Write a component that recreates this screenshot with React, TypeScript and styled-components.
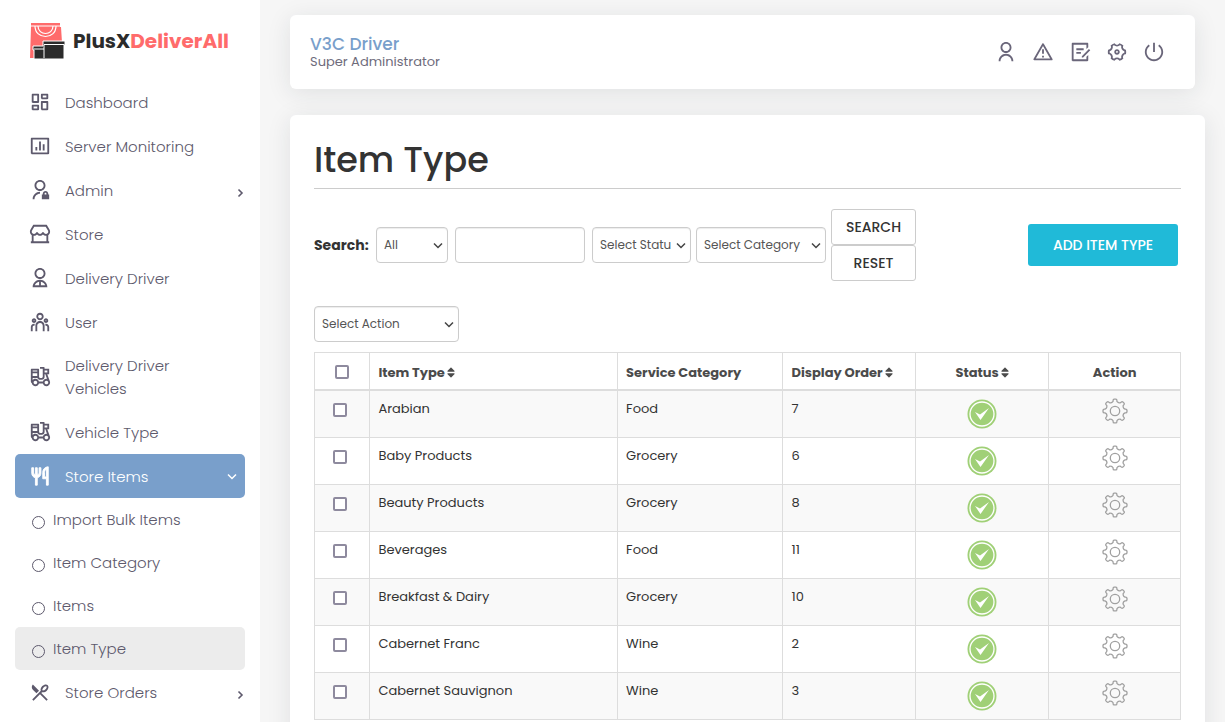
import React from 'react';
import styled, { createGlobalStyle, css } from 'styled-components';
import {
  RiDashboardLine,
  RiBarChartBoxLine,
  RiAdminLine,
  RiStore2Line,
  RiUser2Line,
  RiTeamLine,
  RiTakeawayLine,
  RiRestaurant2Line,
  RiRestaurantLine,
  RiUserLine,
  RiAlertLine,
  RiDraftLine,
  RiSettings4Line,
  RiShutDownLine,
} from 'react-icons/ri';
import { FaSort } from 'react-icons/fa';

const GlobalStyle = createGlobalStyle`
  *, *::before, *::after { box-sizing: border-box; }
  html { overflow: hidden; }
  body {
    margin: 0;
    background: #f6f6f6;
    color: #333;
    font-family: Poppins, Inter, "Open Sans", sans-serif;
    font-size: 14px;
    line-height: 20px;
  }
  button, input, select { font-family: inherit; }
  a { color: inherit; text-decoration: none; }
`;

const Page = styled.div`
  display: flex;
  height: 100vh;
  overflow: hidden;
`;

const Sidebar = styled.aside`
  flex: none;
  width: 260px;
  background: #fff;
  overflow: hidden;
`;

const Brand = styled.a`
  display: flex;
  align-items: center;
  gap: 8px;
  height: 80px;
  padding: 2px 0 0 29px;
  font-size: 20px;
  font-weight: 700;
  color: #2b2b2b;
`;

const BrandAccent = styled.span`
  color: #ff6b6b;
`;

const Menu = styled.ul`
  list-style: none;
  margin: 0;
  padding: 0 15px;
`;

const MenuLink = styled.a<{ $active?: boolean }>`
  display: flex;
  align-items: center;
  min-height: 44px;
  padding: 10px 0 10px 14px;
  border-radius: 5px;
  font-size: 15px;
  font-weight: 300;
  line-height: 23px;
  color: #5d596c;
  > svg { flex: none; width: 22px; height: 22px; }
  ${(p) =>
    p.$active &&
    css`
      background: #799fcb;
      color: #fff;
    `}
`;

const MenuLabel = styled.span`
  flex: 1;
  max-width: 140px;
  margin: 0 auto 0 14px;
`;

const Arrow = styled.span<{ $open?: boolean }>`
  display: flex;
  flex: none;
  padding: ${(p) => (p.$open ? '2px 8px 0 0' : '5px 0 0')};
`;

const SubLink = styled.a<{ $active?: boolean }>`
  display: flex;
  align-items: center;
  gap: 8px;
  height: 43px;
  padding-left: 17px;
  border-radius: 5px;
  font-size: 15px;
  font-weight: 300;
  color: #5d596c;
  background: ${(p) => (p.$active ? '#ececec' : 'transparent')};
  &::before {
    content: '';
    width: 13px;
    height: 13px;
    margin-top: 5px;
    border: 1px solid #5d596c;
    border-radius: 50%;
  }
`;

const Main = styled.main`
  flex: 1;
  min-width: 0;
  padding: 15px 20px 0 30px;
`;

const TopBar = styled.header`
  display: flex;
  align-items: center;
  justify-content: space-between;
  height: 74px;
  margin-right: 10px;
  padding: 0 30px 0 20px;
  background: #fff;
  border-radius: 6px;
  box-shadow: 0 4px 24px rgba(34, 41, 47, 0.1);
`;

const Account = styled.div`
  padding-top: 2px;
  line-height: 18px;
`;

const UserName = styled.div`
  font-size: 17px;
  font-weight: 500;
  color: #799fcb;
`;

const UserRole = styled.div`
  font-size: 13px;
  color: #6e6b7b;
`;

const Tools = styled.nav`
  display: flex;
  gap: 15px;
  color: #6a667a;
`;

const ToolLink = styled.a`
  display: flex;
  svg { width: 22px; height: 22px; }
`;

const Card = styled.section`
  margin-top: 26px;
  padding: 24px;
  background: #fff;
  border-radius: 6px;
  box-shadow: 0 4px 24px rgba(34, 41, 47, 0.1);
`;

const Title = styled.h1`
  margin: 0 0 20px;
  padding-bottom: 7px;
  border-bottom: 1px solid #ccc;
  font-size: 35px;
  font-weight: 500;
  line-height: 42px;
  color: #333;
`;

const Filters = styled.form`
  display: flex;
  align-items: center;
  gap: 5px;
  padding-right: 3px;
`;

const SearchLabel = styled.label`
  width: 57px;
  font-weight: 700;
  white-space: nowrap;
`;

const fieldBox = css`
  height: 36px;
  border: 1px solid #ccc;
  border-radius: 4px;
  box-shadow: inset 0 1px 1px rgba(0, 0, 0, 0.075);
  font-size: 12px;
  color: #555;
  background: #fff;
`;

const SelectWrap = styled.span<{ $width: number; $gap?: boolean }>`
  position: relative;
  flex: none;
  display: inline-flex;
  width: ${(p) => p.$width}px;
  margin-right: ${(p) => (p.$gap ? 2 : 0)}px;
  svg {
    position: absolute;
    top: 15px;
    right: 5px;
    color: #444;
    pointer-events: none;
  }
`;

const Select = styled.select`
  ${fieldBox}
  appearance: none;
  width: 100%;
  padding: 0 19px 1px 7px;
`;

const TextField = styled.input`
  ${fieldBox}
  width: 130px;
  margin-right: 2px;
  padding: 0 8px;
`;

const ButtonStack = styled.div`
  display: flex;
  flex-direction: column;
  width: 85px;
`;

const Button = styled.button`
  height: 36px;
  padding: 0;
  border: 1px solid #ccc;
  border-radius: 3px;
  background: #fff;
  font-size: 14px;
  font-weight: 500;
  color: #333;
`;

const AddButton = styled(Button)`
  width: 150px;
  height: 42px;
  margin-left: auto;
  border: 0;
  background: #20bad8;
  color: #fff;
`;

const BulkBar = styled.div`
  margin: 25px 0 10px;
  display: flex;
`;

const Table = styled.table`
  width: 100%;
  table-layout: fixed;
  border-collapse: collapse;
  font-size: 13px;
`;

const Th = styled.th<{ $center?: boolean }>`
  height: 37px;
  padding: 4px 8px 0;
  border: 1px solid #ddd;
  border-bottom-width: 2px;
  text-align: ${(p) => (p.$center ? 'center' : 'left')};
  font-weight: 700;
  color: #4b4b4b;
  white-space: nowrap;
  svg { width: 8px; margin-left: 2px; vertical-align: -2px; }
`;

const Td = styled.td<{ $center?: boolean }>`
  height: 47px;
  padding: 8px;
  border: 1px solid #ddd;
  vertical-align: top;
  text-align: ${(p) => (p.$center ? 'center' : 'left')};
  svg { display: block; margin: 0 auto; }
`;

const Row = styled.tr`
  &:nth-child(odd) { background: #f9f9f9; }
`;

const Tick = styled.input`
  appearance: none;
  display: inline-block;
  width: 14px;
  height: 14px;
  margin: 4px 4px 0 0;
  border: 2px solid #8e8a9e;
  border-radius: 2px;
  background: #fff;
  vertical-align: top;
`;

const HeadTick = styled(Tick)`
  margin: 2px 0 0;
`;

const IconButton = styled.button`
  display: block;
  margin: -1px auto 0;
  padding: 0;
  border: 0;
  background: none;
`;

const Logo = () => (
  <svg width="36" height="36" viewBox="0 0 36 36" aria-hidden="true">
    <path d="M2 0h29v4h1l2 31H1L2 4z" fill="#ff6b6b" />
    <path d="M2 3h29" stroke="#fff" strokeWidth="1" />
    <path d="M6 3c0 14 21 14 21 0M9 3c0 10 15 10 15 0" fill="none" stroke="#fff" strokeWidth="1.2" />
    <path d="M4 23h10v-5h22v4h-1v14H5v-9H4z" fill="#2b2b2b" stroke="#fff" />
    <path d="M15 22v13M15 21.500h20M5 26h10" stroke="#fff" />
  </svg>
);

const polar = (radius: number, degrees: number) => {
  const a = (degrees * Math.PI) / 180;
  return `${(13 + radius * Math.cos(a)).toFixed(2)} ${(13 + radius * Math.sin(a)).toFixed(2)}`;
};

const gearPath =
  Array.from({ length: 8 }, (_, i) => {
    const a = i * 45;
    return [
      `${i ? 'L' : 'M'}${polar(10.8, a - 10)}`,
      `Q${polar(12, a - 9)} ${polar(12, a - 4)}`,
      `L${polar(12, a + 4)}`,
      `Q${polar(12, a + 9)} ${polar(10.8, a + 10)}`,
      `Q${polar(9.6, a + 10)} ${polar(9.3, a + 16)}`,
      `Q${polar(8.8, a + 22.5)} ${polar(9.3, a + 29)}`,
      `Q${polar(9.6, a + 35)} ${polar(10.8, a + 35)}`,
    ].join('');
  }).join('') + 'Z';

const Gear = () => (
  <svg width="26" height="26" viewBox="0 0 26 26" fill="none" stroke="#a0a0a0" strokeWidth="1.3" strokeLinejoin="round">
    <circle cx="13" cy="13" r="4.700" />
    <path d={gearPath} />
  </svg>
);

const ActiveBadge = () => (
  <svg width="30" height="30" viewBox="0 0 30 30" role="img" aria-label="Active">
    <circle cx="15" cy="15" r="14.500" fill="#a0d077" />
    <circle cx="15" cy="15" r="12" fill="none" stroke="#fff" strokeWidth="1.300" />
    <path d="M8 13l5 2.500L22 9 13.500 21z" fill="#fff" />
  </svg>
);

const ChevronRight = () => (
  <svg width="9" height="10" viewBox="0 0 9 10" fill="none" stroke="currentColor" strokeWidth="1.600">
    <path d="M2.500 1.500 6 5 2.500 8.500" />
  </svg>
);

const ChevronDown = () => (
  <svg width="10" height="8" viewBox="0 0 10 8" fill="none" stroke="currentColor" strokeWidth="1.500">
    <path d="M1 1.500 5 5.500 9 1.500" />
  </svg>
);

type Entry = { label: string; icon: React.ReactNode; arrow?: boolean; children?: string[] };

const menu: Entry[] = [
  { label: 'Dashboard', icon: <RiDashboardLine /> },
  { label: 'Server Monitoring', icon: <RiBarChartBoxLine /> },
  { label: 'Admin', icon: <RiAdminLine />, arrow: true },
  { label: 'Store', icon: <RiStore2Line /> },
  { label: 'Delivery Driver', icon: <RiUser2Line /> },
  { label: 'User', icon: <RiTeamLine /> },
  { label: 'Delivery Driver Vehicles', icon: <RiTakeawayLine /> },
  { label: 'Vehicle Type', icon: <RiTakeawayLine /> },
  {
    label: 'Store Items',
    icon: <RiRestaurantLine stroke="currentColor" strokeWidth={1} />,
    children: ['Import Bulk Items', 'Item Category', 'Items', 'Item Type'],
  },
  { label: 'Store Orders', icon: <RiRestaurant2Line />, arrow: true },
];

const rows = [
  ['Arabian', 'Food', 7],
  ['Baby Products', 'Grocery', 6],
  ['Beauty Products', 'Grocery', 8],
  ['Beverages', 'Food', 11],
  ['Breakfast & Dairy', 'Grocery', 10],
  ['Cabernet Franc', 'Wine', 2],
  ['Cabernet Sauvignon', 'Wine', 3],
];

const tools = [
  ['Profile', RiUserLine],
  ['Alerts', RiAlertLine],
  ['Notes', RiDraftLine],
  ['Settings', RiSettings4Line],
  ['Log out', RiShutDownLine],
] as const;

const Dropdown = ({ label, text, width, gap }: { label: string; text: string; width: number; gap?: boolean }) => (
  <SelectWrap $width={width} $gap={gap}>
    <Select aria-label={label}>
      <option>{text}</option>
    </Select>
    <ChevronDown />
  </SelectWrap>
);

export default function App() {
  return (
    <Page>
      <GlobalStyle />
      <Sidebar>
        <Brand href="#">
          <Logo />
          <span>
            PlusX<BrandAccent>DeliverAll</BrandAccent>
          </span>
        </Brand>
        <Menu>
          {menu.map((m) => (
            <li key={m.label}>
              <MenuLink href="#" $active={!!m.children}>
                {m.icon}
                <MenuLabel>{m.label}</MenuLabel>
                {m.arrow && <Arrow><ChevronRight /></Arrow>}
                {m.children && <Arrow $open><ChevronDown /></Arrow>}
              </MenuLink>
              {m.children?.map((c) => (
                <SubLink key={c} href="#" $active={c === 'Item Type'}>
                  {c}
                </SubLink>
              ))}
            </li>
          ))}
        </Menu>
      </Sidebar>
      <Main>
        <TopBar>
          <Account>
            <UserName>V3C Driver</UserName>
            <UserRole>Super Administrator</UserRole>
          </Account>
          <Tools>
            {tools.map(([name, Icon]) => (
              <ToolLink key={name} href="#" aria-label={name}>
                <Icon />
              </ToolLink>
            ))}
          </Tools>
        </TopBar>
        <Card>
          <Title>Item Type</Title>
          <Filters>
            <SearchLabel htmlFor="keyword">Search:</SearchLabel>
            <Dropdown label="Search in" text="All" width={72} gap />
            <TextField id="keyword" />
            <Dropdown label="Status" text="Select Status" width={99} />
            <Dropdown label="Category" text="Select Category" width={130} />
            <ButtonStack>
              <Button type="button">SEARCH</Button>
              <Button type="button">RESET</Button>
            </ButtonStack>
            <AddButton type="button">ADD ITEM TYPE</AddButton>
          </Filters>
          <BulkBar>
            <Dropdown label="Bulk action" text="Select Action" width={145} />
          </BulkBar>
          <Table>
            <colgroup>
              <col style={{ width: '6.4%' }} />
              <col style={{ width: '28.6%' }} />
              <col style={{ width: '19.1%' }} />
              <col style={{ width: '15.3%' }} />
              <col style={{ width: '15.4%' }} />
              <col style={{ width: '15.2%' }} />
            </colgroup>
            <thead>
              <tr>
                <Th $center><HeadTick type="checkbox" aria-label="Select all" /></Th>
                <Th>Item Type<FaSort /></Th>
                <Th>Service Category</Th>
                <Th>Display Order<FaSort /></Th>
                <Th $center>Status<FaSort /></Th>
                <Th $center>Action</Th>
              </tr>
            </thead>
            <tbody>
              {rows.map(([name, service, order]) => (
                <Row key={name}>
                  <Td $center><Tick type="checkbox" aria-label={`Select ${name}`} /></Td>
                  <Td>{name}</Td>
                  <Td>{service}</Td>
                  <Td>{order}</Td>
                  <Td $center><ActiveBadge /></Td>
                  <Td $center><IconButton type="button" aria-label={`Actions for ${name}`}><Gear /></IconButton></Td>
                </Row>
              ))}
            </tbody>
          </Table>
        </Card>
      </Main>
    </Page>
  );
}
